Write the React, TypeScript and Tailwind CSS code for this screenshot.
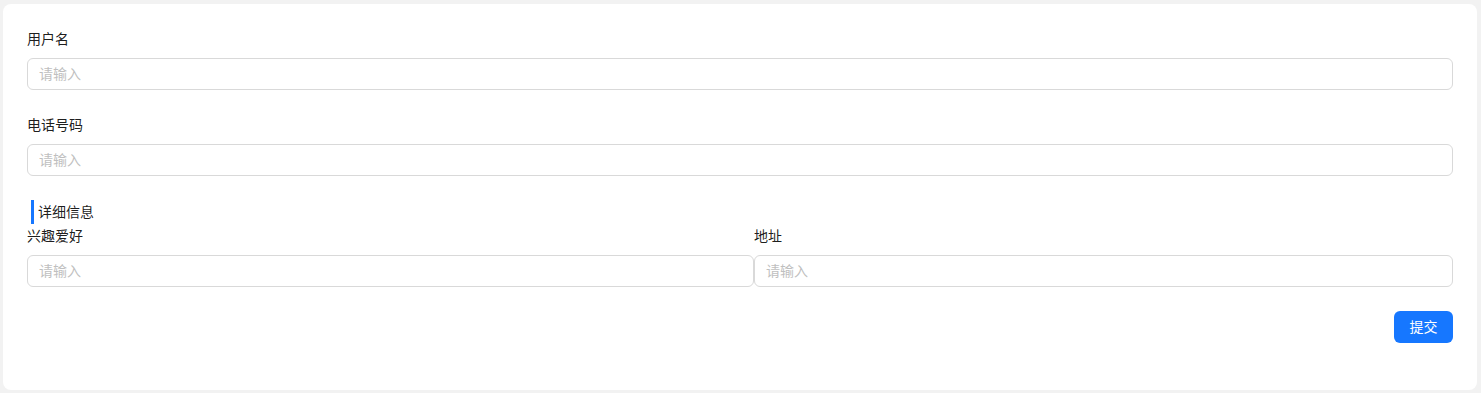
import React from "react";

const font = { fontFamily: '"Liberation Sans", "Noto Sans CJK SC", sans-serif' };

function Field({ label, className = "" }: { label: string; className?: string }) {
  return (
    <div className={`flex flex-col ${className}`}>
      <label className="h-[22px] leading-[22px] text-sm text-black/90 mb-2">{label}</label>
      <input
        placeholder="请输入"
        className="h-8 w-full rounded-md border border-[#d9d9d9] bg-white px-[11px] text-sm text-black/90 placeholder:text-[#bfbfbf] outline-none"
      />
    </div>
  );
}

export default function App() {
  return (
    <div className="min-h-[393px] bg-[#f2f2f2] pt-[4px] pl-[3px] pr-[4px] pb-[3px]" style={font}>
      <div className="h-[386px] rounded-lg bg-white px-6 pt-6">
        <Field label="用户名" />
        <Field label="电话号码" className="mt-6" />

        <div className="mt-6 flex items-center h-[24px] ml-1">
          <span className="w-[3px] h-[24px] bg-[#1677ff]" />
          <span className="ml-1 text-sm text-black/90">详细信息</span>
        </div>

        <div className="mt-[1px] grid grid-cols-[727px_1fr]">
          <Field label="兴趣爱好" />
          <Field label="地址" />
        </div>

        <div className="mt-6 flex justify-end">
          <button className="h-8 w-[59px] rounded-md bg-[#1677ff] text-sm text-white">提交</button>
        </div>
      </div>
    </div>
  );
}
